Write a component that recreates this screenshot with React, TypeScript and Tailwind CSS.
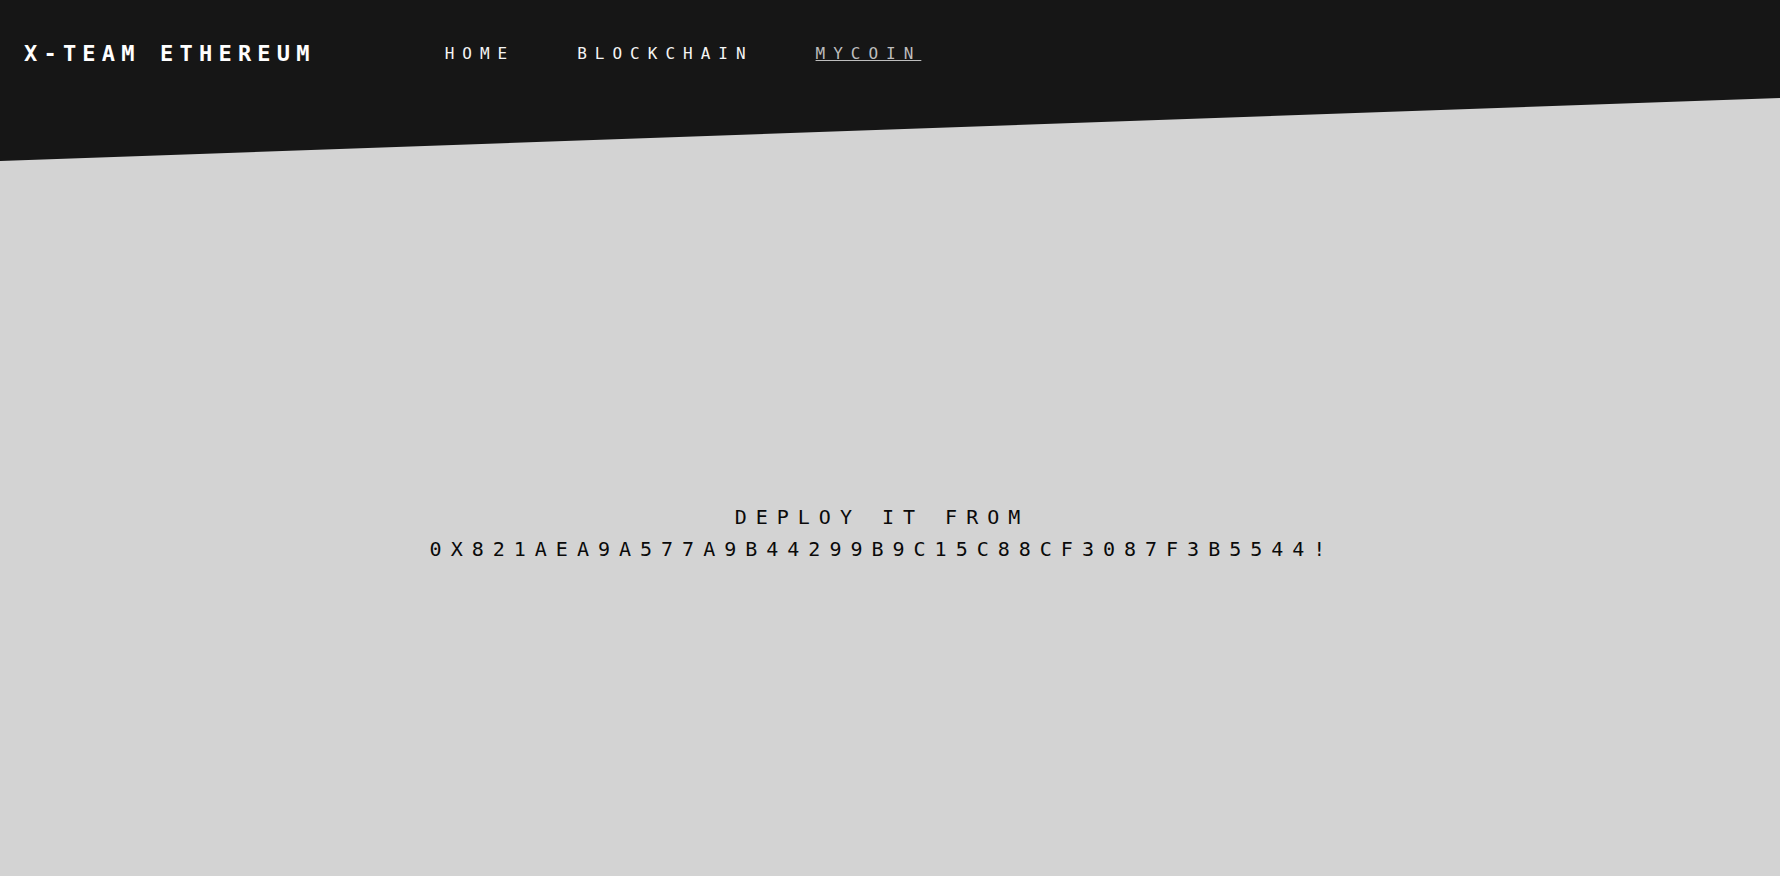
import React from "react";

export default function App() {
  return (
    <div className="min-h-[876px] w-full bg-[#d3d3d3] font-['DejaVu_Sans_Mono',monospace]">
      <header className="h-[161px] w-full bg-[#161616] [clip-path:polygon(0_0,100%_0,100%_98px,0_161px)]">
        <div className="flex h-[106px] items-center pl-[24px]">
          <div className="text-[22px] font-bold uppercase tracking-[6.2px] text-white">X-Team Ethereum</div>
          <nav className="ml-[129px] mt-[2px] flex items-center gap-[62px] text-[16px] uppercase tracking-[8px]">
            <a className="text-[#f4f4f4]">Home</a>
            <a className="text-[#f4f4f4]">Blockchain</a>
            <a className="text-[#bdbdbd] underline">Mycoin</a>
          </nav>
        </div>
      </header>
      <main className="pt-[340px] pr-[16px] text-center text-[20px] leading-[32px] tracking-[9px] text-[#0a0a0a]">
        <p>DEPLOY IT FROM</p>
        <p>0X821AEA9A577A9B44299B9C15C88CF3087F3B5544!</p>
      </main>
    </div>
  );
}
